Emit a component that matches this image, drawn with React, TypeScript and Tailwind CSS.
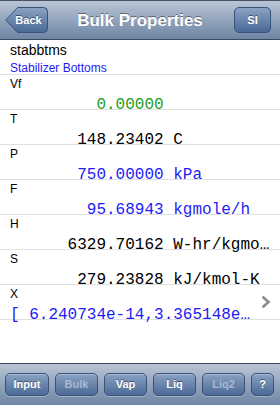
import React from "react";

const BLUE = "text-[#1c1cf5]";

type Row = { label: string; num: string; unit: string; color: string };

const rows: Row[] = [
  { label: "Vf", num: "0.00000", unit: "", color: "text-[#22a022]" },
  { label: "T", num: "148.23402", unit: "C", color: "text-black" },
  { label: "P", num: "750.00000", unit: "kPa", color: BLUE },
  { label: "F", num: "95.68943", unit: "kgmole/h", color: BLUE },
  { label: "H", num: "6329.70162", unit: "W-hr/kgmole", color: "text-black" },
  { label: "S", num: "279.23828", unit: "kJ/kmol-K", color: "text-black" },
];

function ToolButton({ label, disabled, w }: { label: string; disabled?: boolean; w: string }) {
  return (
    <div
      className={`${w} h-[23px] rounded-[5px] border border-[#3a5277] bg-gradient-to-b from-[#8aa2c3] to-[#4b6a97] shadow-[inset_0_1px_0_rgba(255,255,255,0.25),0_1px_0_rgba(255,255,255,0.3)] flex items-center justify-center text-[11px] font-bold leading-none ${
        disabled ? "text-[#a9b9d0]" : "text-white [text-shadow:0_-1px_0_rgba(0,0,0,0.45)]"
      }`}
    >
      {label}
    </div>
  );
}

export default function App() {
  return (
    <div className="w-[280px] h-[405px] flex flex-col bg-white overflow-hidden font-['Liberation_Sans',Arial,sans-serif]">
      {/* Nav bar */}
      <div className="h-[40px] shrink-0 border-t border-b border-t-[#4a5260] border-b-[#3d4a5c] bg-gradient-to-b from-[#b9c5d5] to-[#6e85a4] grid grid-cols-[1fr_auto_1fr] items-center px-[5px]">
        <div className="relative w-[43px] h-[26px]">
          <svg className="absolute inset-0" width="43" height="26" viewBox="0 0 43 26">
            <defs>
              <linearGradient id="bk" x1="0" y1="0" x2="0" y2="1">
                <stop offset="0" stopColor="#8ba3c4" />
                <stop offset="1" stopColor="#4a6996" />
              </linearGradient>
            </defs>
            <path
              d="M12.5 0.5 H38.5 A4 4 0 0 1 42.5 4.5 V21.5 A4 4 0 0 1 38.5 25.5 H12.5 L0.8 13 Z"
              fill="url(#bk)"
              stroke="#3a5277"
              strokeWidth="1"
            />
          </svg>
          <div className="relative h-full flex items-center justify-center pl-[4px] text-white text-[11px] font-bold leading-none [text-shadow:0_-1px_0_rgba(0,0,0,0.45)]">
            Back
          </div>
        </div>
        <div className="text-white text-[17px] font-bold leading-none [text-shadow:0_-1px_0_rgba(0,0,0,0.45)]">
          Bulk Properties
        </div>
        <div className="flex justify-end pr-[4px]">
          <div className="w-[37px] h-[26px] rounded-[5px] border border-[#3a5277] bg-gradient-to-b from-[#8ba3c4] to-[#4a6996] flex items-center justify-center text-white text-[11px] font-bold leading-none [text-shadow:0_-1px_0_rgba(0,0,0,0.45)]">
            SI
          </div>
        </div>
      </div>

      {/* Header */}
      <div className="h-[35px] shrink-0 border-b border-[#e0e0e0] pl-[10px] pt-[2px]">
        <div className="text-[14px] leading-[17px] text-black">stabbtms</div>
        <div className={`mt-[2px] text-[12px] leading-[14px] ${BLUE}`}>Stabilizer Bottoms</div>
      </div>

      {/* Rows */}
      {rows.map((r) => (
        <div key={r.label} className="h-[35px] shrink-0 border-b border-[#e0e0e0]">
          <div className="pl-[10px] pt-[2px] text-[12px] leading-[15px] text-black">{r.label}</div>
          <div
            className={`mt-[5px] pl-[10px] pr-[8px] font-['Liberation_Mono','Courier_New',monospace] text-[16px] leading-[16px] whitespace-pre overflow-hidden text-ellipsis ${r.color}`}
          >
            {r.num.padStart(16, " ") + (r.unit ? " " + r.unit : "")}
          </div>
        </div>
      ))}

      {/* X row */}
      <div className="h-[35px] shrink-0 border-b border-[#e0e0e0] flex items-center">
        <div className="flex-1 min-w-0 self-start">
          <div className="pl-[10px] pt-[2px] text-[12px] leading-[15px] text-black">X</div>
          <div
            className={`mt-[5px] pl-[10px] font-['Liberation_Mono','Courier_New',monospace] text-[16px] leading-[16px] whitespace-pre overflow-hidden text-ellipsis ${BLUE}`}
          >
            {"[ 6.240734e-14,3.365148e-10,1.234567e-05 ]"}
          </div>
        </div>
        <div className="w-[26px] shrink-0 flex items-center justify-start pl-[8px]">
          <svg width="9" height="12" viewBox="0 0 9 12">
            <polyline points="1.5,1.5 6.5,6 1.5,10.5" fill="none" stroke="#8c8c8c" strokeWidth="2.6" strokeLinecap="square" strokeLinejoin="miter" />
          </svg>
        </div>
      </div>

      <div className="flex-1" />

      {/* Toolbar */}
      <div className="h-[42px] shrink-0 border-t border-[#3d4a5c] bg-gradient-to-b from-[#b9c5d5] to-[#6e85a4] flex items-center gap-[6px] pl-[5px]">
        <ToolButton label="Input" w="w-[44px]" />
        <ToolButton label="Bulk" w="w-[43px]" disabled />
        <ToolButton label="Vap" w="w-[43px]" />
        <ToolButton label="Liq" w="w-[43px]" />
        <ToolButton label="Liq2" w="w-[43px]" disabled />
        <ToolButton label="?" w="w-[23px]" />
      </div>
    </div>
  );
}
